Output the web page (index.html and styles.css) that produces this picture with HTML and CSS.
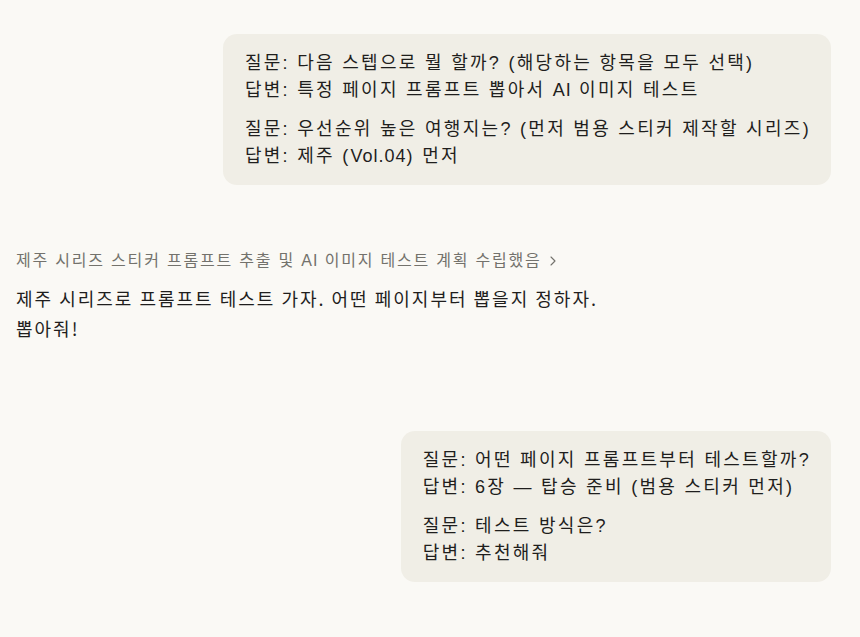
FILE: index.html
```html
<!DOCTYPE html>
<html>
<head>
	<meta name="viewport" content="width=device-width, initial-scale=1">
	<title>대화</title>
	<link rel="stylesheet" href="styles.css">
</head>
<body>
	<div class="chat">
		<div class="row user">
			<div class="bubble">
				<p>질문: 다음 스텝으로 뭘 할까? (해당하는 항목을 모두 선택)<br>답변: 특정 페이지 프롬프트 뽑아서 <span class="en">AI</span> 이미지 테스트</p>
				<p>질문: 우선순위 높은 여행지는? (먼저 범용 스티커 제작할 시리즈)<br>답변: 제주 (<span class="en">Vol.04</span>) 먼저</p>
			</div>
		</div>

		<div class="reply">
			<div class="summary">
				<span>제주 시리즈 스티커 프롬프트 추출 및 <span class="en">AI</span> 이미지 테스트 계획 수립했음</span>
				<svg class="chevron" width="8" height="10" viewBox="0 0 8 10"><path d="M2 1 L6 5 L2 9" fill="none" stroke="currentColor" stroke-width="1.1" stroke-linecap="round" stroke-linejoin="round"/></svg>
			</div>
			<p>제주 시리즈로 프롬프트 테스트 가자. 어떤 페이지부터 뽑을지 정하자.<br>뽑아줘!</p>
		</div>

		<div class="row user">
			<div class="bubble">
				<p>질문: 어떤 페이지 프롬프트부터 테스트할까?<br>답변: 6장 — 탑승 준비 (범용 스티커 먼저)</p>
				<p>질문: 테스트 방식은?<br>답변: 추천해줘</p>
			</div>
		</div>
	</div>
</body>
</html>
```

FILE: styles.css
```css
body {
	margin: 0;
	padding: 0;
	background-color: #faf9f5;
	color: #1f1e1d;
	font-family: "Liberation Sans", "Noto Sans CJK KR", sans-serif;
	font-size: 18px;
	line-height: 27px;
	letter-spacing: 2.3px;
}
p {
	margin: 0;
}
.en {
	letter-spacing: 1px;
}
.chat {
	padding: 34px 29px 0 16px;
}
.row {
	display: flex;
	justify-content: flex-end;
}
.bubble {
	background-color: #f0eee6;
	border-radius: 14px;
	padding: 16px 20px 15px 22px;
}
.bubble p + p {
	margin-top: 12px;
}
.reply {
	margin: 62px 0 88px;
}
.summary {
	display: flex;
	align-items: center;
	gap: 7px;
	font-size: 16px;
	letter-spacing: 1.8px;
	color: #73726c;
	margin-bottom: 9px;
}
.chevron {
	color: #73726c;
}
.reply p {
	font-family: "Noto Sans CJK KR", sans-serif;
	line-height: 30px;
	letter-spacing: 2px;
}
```
